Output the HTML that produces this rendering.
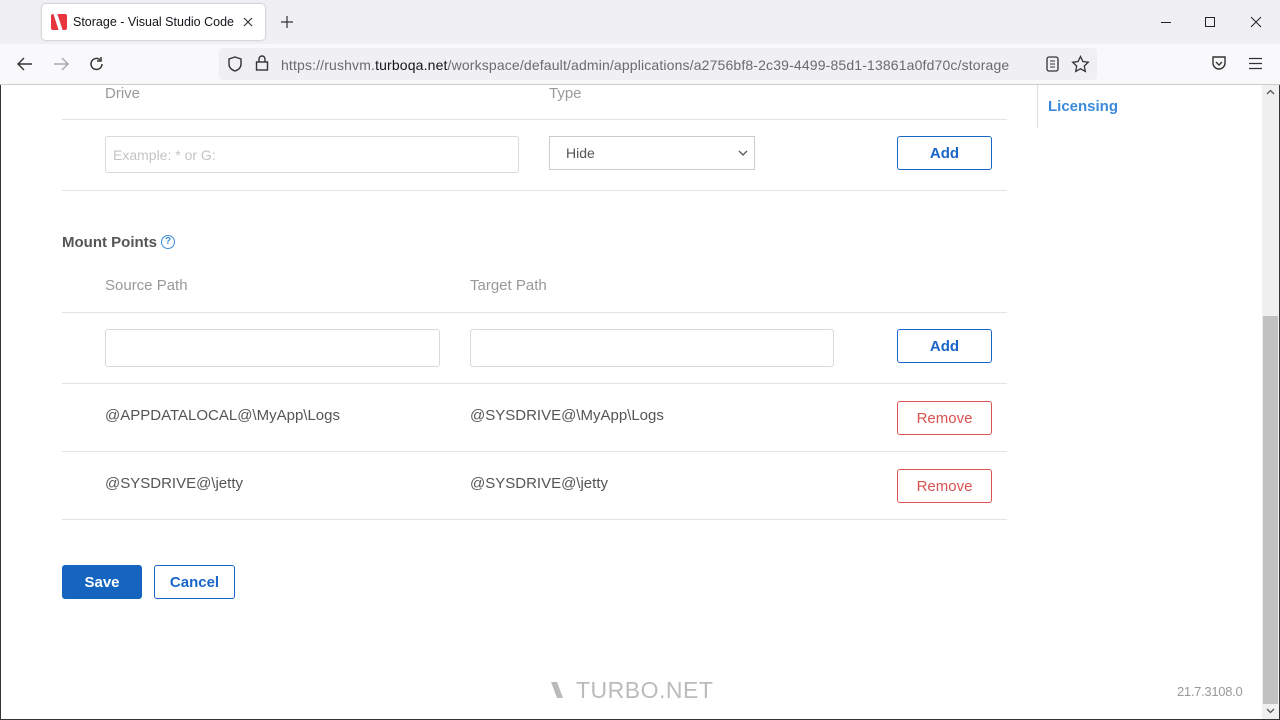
<!DOCTYPE html>
<html><head><meta charset="utf-8"><style>
*{box-sizing:border-box;margin:0;padding:0}
body{width:1280px;height:720px;overflow:hidden;background:#fff;font-family:"Liberation Sans",sans-serif;position:relative}
.a{position:absolute}
.lbl{color:#999;font-size:15px}
.hr{position:absolute;left:62px;width:945px;height:1px;background:#e3e3e3}
.in{position:absolute;border:1px solid #d9d9d9;border-radius:3px;background:#fff}
.btn{position:absolute;border:1px solid #1a66c8;border-radius:3px;color:#1a66c8;font-weight:bold;font-size:15px;text-align:center;background:#fff}
.rm{border-color:#d9534f;color:#d9534f;font-weight:normal}
.val{color:#555;font-size:15px}
</style></head><body>
<div class="a" style="left:0;top:0;width:1280px;height:44px;background:#f0f0f4"></div>
<div class="a" style="left:42px;top:4px;width:223px;height:36px;background:#fff;border-radius:4px;box-shadow:0 0 2px rgba(0,0,0,.3)"></div>
<div class="a" style="left:51px;top:14px;width:16px;height:16px;background:#e8363f;border-radius:2px"></div>
<div class="a" style="left:56px;top:14px;width:4px;height:16px;background:#fff;transform:skewX(18deg)"></div>
<div class="a" style="left:73px;top:15px;font-size:12.5px;color:#15141a">Storage - Visual Studio Code</div>
<svg class="a" style="left:243px;top:17px" width="10" height="10"><path d="M1 1l8 8M9 1l-8 8" stroke="#333" stroke-width="1.2"/></svg>
<svg class="a" style="left:280px;top:15px" width="14" height="14"><path d="M7 1v12M1 7h12" stroke="#333" stroke-width="1.2"/></svg>
<div class="a" style="left:1161px;top:22px;width:10px;height:1px;background:#222"></div>
<div class="a" style="left:1205px;top:17px;width:10px;height:10px;border:1px solid #222"></div>
<svg class="a" style="left:1250px;top:16px" width="12" height="12"><path d="M1 1l10 10M11 1l-10 10" stroke="#222" stroke-width="1"/></svg>
<div class="a" style="left:0;top:44px;width:1280px;height:41px;background:#f9f9fb;border-bottom:1px solid #ccc"></div>
<svg class="a" style="left:16px;top:56px" width="18" height="16"><path d="M16 8H2M8 2L2 8l6 6" fill="none" stroke="#333" stroke-width="1.4"/></svg>
<svg class="a" style="left:52px;top:56px" width="18" height="16"><path d="M2 8h14M10 2l6 6-6 6" fill="none" stroke="#aaa" stroke-width="1.4"/></svg>
<svg class="a" style="left:88px;top:55px" width="18" height="18"><path d="M14 9a5.5 5.5 0 1 1-2-4.3" fill="none" stroke="#333" stroke-width="1.5"/><path d="M13 2v4h-4" fill="none" stroke="#333" stroke-width="1.5"/></svg>
<div class="a" style="left:219px;top:48px;width:878px;height:32px;background:#f0f0f4;border-radius:4px"></div>
<svg class="a" style="left:226px;top:55px" width="18" height="18"><path d="M9 2 L15 4 V9 C15 13 12 15 9 16 C6 15 3 13 3 9 V4 Z" fill="none" stroke="#333" stroke-width="1.4"/></svg>
<svg class="a" style="left:254px;top:54px" width="16" height="18"><rect x="2.5" y="8" width="11" height="8" fill="none" stroke="#333" stroke-width="1.4"/><path d="M5 8 V5 a3 3 0 0 1 6 0 V8" fill="none" stroke="#333" stroke-width="1.4"/></svg>
<div class="a" style="left:281px;top:57px;font-size:14px;color:#6b6b6b;white-space:nowrap;letter-spacing:0.15px">https://rushvm.<span style="color:#15141a">turboqa.net</span>/workspace/default/admin/applications/a2756bf8-2c39-4499-85d1-13861a0fd70c/storage</div>
<svg class="a" style="left:1045px;top:55px" width="16" height="18"><rect x="2" y="2" width="11" height="14" rx="2" fill="none" stroke="#333" stroke-width="1.3"/><path d="M5 6h5M5 9h5M5 12h5" stroke="#333"/></svg>
<svg class="a" style="left:1071px;top:55px" width="19" height="18"><path d="M9.5 1.5l2.4 5 5.4.7-4 3.8 1 5.4-4.8-2.6-4.8 2.6 1-5.4-4-3.8 5.4-.7z" fill="none" stroke="#333" stroke-width="1.3"/></svg>
<svg class="a" style="left:1210px;top:55px" width="18" height="16"><path d="M3 2h12v6a6 6 0 0 1-12 0z" fill="none" stroke="#333" stroke-width="1.4"/><path d="M6 7l3 3 3-3" fill="none" stroke="#333" stroke-width="1.4"/></svg>
<svg class="a" style="left:1248px;top:57px" width="15" height="13"><path d="M1 1.5h13M1 6.5h13M1 11.5h13" stroke="#333" stroke-width="1.3"/></svg>
<div class="a" style="left:0;top:85px;width:1px;height:635px;background:#333"></div>
<div class="a" style="left:1279px;top:85px;width:1px;height:635px;background:#333"></div>
<div class="a" style="left:0;top:719px;width:1280px;height:1px;background:#333"></div>
<div class="a" style="left:1262px;top:85px;width:17px;height:634px;background:#f0f0f0"></div>
<div class="a" style="left:1263px;top:316px;width:15px;height:388px;background:#c1c1c1"></div>
<svg class="a" style="left:1266px;top:89px" width="9" height="6"><path d="M1 5l3.5-3.5L8 5" fill="none" stroke="#555" stroke-width="1.3"/></svg>
<svg class="a" style="left:1266px;top:708px" width="9" height="6"><path d="M1 1l3.5 3.5L8 1" fill="none" stroke="#555" stroke-width="1.3"/></svg>
<div class="a" style="left:1037px;top:85px;width:1px;height:43px;background:#ddd"></div>
<div class="a" style="left:1048px;top:98px;font-size:15px;font-weight:bold;color:#3b8ad9">Licensing</div>
<div class="a lbl" style="left:105px;top:85px">Drive</div>
<div class="a lbl" style="left:549px;top:85px">Type</div>
<div class="hr" style="top:119px"></div>
<div class="in" style="left:105px;top:136px;width:414px;height:37px"></div>
<div class="a" style="left:113px;top:147px;font-size:14px;color:#c4c4c4">Example: * or G:</div>
<div class="a" style="left:549px;top:136px;width:206px;height:34px;border:1px solid #ccc;background:#fff"></div>
<div class="a" style="left:566px;top:145px;font-size:14px;color:#555">Hide</div>
<svg class="a" style="left:738px;top:149px" width="10" height="8"><path d="M1 2l4 4 4-4" fill="none" stroke="#555" stroke-width="1.3"/></svg>
<div class="btn" style="left:897px;top:136px;width:95px;height:34px;line-height:33px">Add</div>
<div class="hr" style="top:190px"></div>
<div class="a" style="left:62px;top:234px;font-size:15px;font-weight:bold;color:#555">Mount Points</div>
<div class="a" style="left:161px;top:235px;width:14px;height:14px;border:1.5px solid #3b8ad9;border-radius:50%;color:#3b8ad9;font-size:10px;font-weight:bold;text-align:center;line-height:11px">?</div>
<div class="a lbl" style="left:105px;top:277px">Source Path</div>
<div class="a lbl" style="left:470px;top:277px">Target Path</div>
<div class="hr" style="top:312px"></div>
<div class="in" style="left:105px;top:329px;width:335px;height:38px"></div>
<div class="in" style="left:470px;top:329px;width:364px;height:38px"></div>
<div class="btn" style="left:897px;top:329px;width:95px;height:34px;line-height:33px">Add</div>
<div class="hr" style="top:383px"></div>
<div class="a val" style="left:105px;top:407px">@APPDATALOCAL@\MyApp\Logs</div>
<div class="a val" style="left:470px;top:407px">@SYSDRIVE@\MyApp\Logs</div>
<div class="btn rm" style="left:897px;top:401px;width:95px;height:34px;line-height:33px">Remove</div>
<div class="hr" style="top:451px"></div>
<div class="a val" style="left:105px;top:475px">@SYSDRIVE@\jetty</div>
<div class="a val" style="left:470px;top:475px">@SYSDRIVE@\jetty</div>
<div class="btn rm" style="left:897px;top:469px;width:95px;height:34px;line-height:33px">Remove</div>
<div class="hr" style="top:519px"></div>
<div class="btn" style="left:62px;top:565px;width:80px;height:34px;line-height:33px;background:#1565c0;border-color:#1565c0;color:#fff">Save</div>
<div class="btn" style="left:154px;top:565px;width:81px;height:34px;line-height:33px">Cancel</div>
<div class="a" style="left:554px;top:682px;width:6px;height:16px;background:#bbb;transform:skewX(20deg)"></div>
<div class="a" style="left:576px;top:677px;font-size:23px;color:#bbb;letter-spacing:0.5px">TURBO.NET</div>
<div class="a" style="left:1177px;top:684px;font-size:13px;color:#999;letter-spacing:-0.3px">21.7.3108.0</div>
</body></html>
